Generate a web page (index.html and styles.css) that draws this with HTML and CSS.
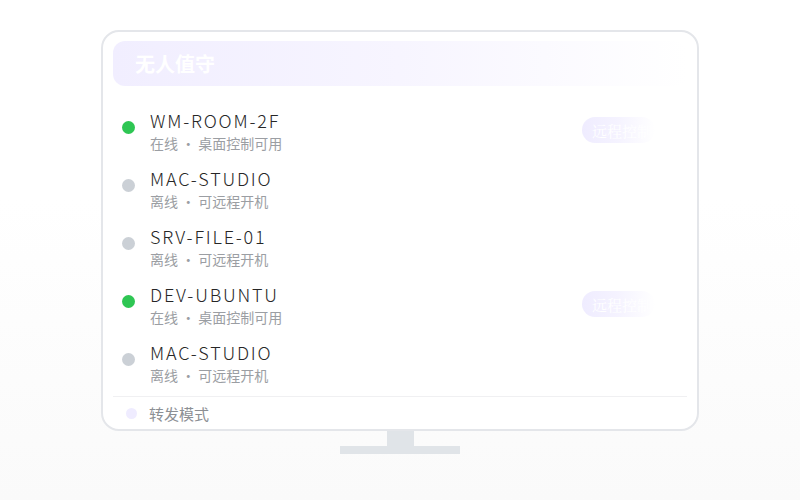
FILE: index.html
```html
<!DOCTYPE html>
<html lang="zh-CN">
<head>
  <meta charset="UTF-8">
  <title>无人值守</title>
  <link rel="stylesheet" href="styles.css">
</head>
<body>
  <div class="scene">
    <div class="monitor">
      <div class="header">无人值守</div>

      <ul class="hosts">
        <li class="host">
          <span class="dot on"></span>
          <div class="info">
            <div class="name">WM-ROOM-2F</div>
            <div class="sub">在线 · 桌面控制可用</div>
          </div>
          <button class="remote">远程控制</button>
        </li>
        <li class="host">
          <span class="dot"></span>
          <div class="info">
            <div class="name">MAC-STUDIO</div>
            <div class="sub">离线 · 可远程开机</div>
          </div>
        </li>
        <li class="host">
          <span class="dot"></span>
          <div class="info">
            <div class="name">SRV-FILE-01</div>
            <div class="sub">离线 · 可远程开机</div>
          </div>
        </li>
        <li class="host">
          <span class="dot on"></span>
          <div class="info">
            <div class="name">DEV-UBUNTU</div>
            <div class="sub">在线 · 桌面控制可用</div>
          </div>
          <button class="remote">远程控制</button>
        </li>
        <li class="host">
          <span class="dot"></span>
          <div class="info">
            <div class="name">MAC-STUDIO</div>
            <div class="sub">离线 · 可远程开机</div>
          </div>
        </li>
      </ul>

      <div class="footer">
        <span class="mini-dot"></span>
        转发模式
      </div>
    </div>
    <div class="neck"></div>
    <div class="base"></div>
  </div>
</body>
</html>
```

FILE: styles.css
```css
html, body {
  height: 100%;
}

body {
  margin: 0;
  background: linear-gradient(180deg, #ffffff 0%, #ffffff 40%, #fafafa 100%);
  font-family: "Noto Sans CJK SC", sans-serif;
}

.scene {
  display: flex;
  flex-direction: column;
  align-items: center;
  padding-top: 30px;
}

.monitor {
  box-sizing: border-box;
  width: 598px;
  height: 401px;
  border: 2px solid #e4e6ea;
  border-radius: 18px;
  background: #ffffff;
  padding: 9px 10px 0 10px;
  display: flex;
  flex-direction: column;
}

.header {
  height: 45px;
  border-radius: 12px;
  background: linear-gradient(90deg, #f1eeff 0%, #f7f5ff 50%, #ffffff 100%);
  color: #ffffff;
  font-weight: bold;
  font-size: 20px;
  line-height: 45px;
  padding-left: 22px;
}

.hosts {
  list-style: none;
  margin: 12px 0 0 0;
  padding: 0;
}

.host {
  box-sizing: border-box;
  height: 58px;
  padding-top: 11px;
  display: flex;
  align-items: flex-start;
}

.dot {
  width: 13px;
  height: 13px;
  border-radius: 50%;
  background: #cbd0d6;
  margin: 12px 15px 0 9px;
  flex-shrink: 0;
}

.dot.on {
  background: #2ec653;
}

.info {
  flex: 1;
}

.name {
  font-size: 18px;
  font-weight: 300;
  line-height: 23px;
  color: #262626;
  letter-spacing: 1.8px;
}

.sub {
  font-size: 14px;
  line-height: 19px;
  margin-top: 2px;
  color: #9b9ea3;
}

.remote {
  width: 73px;
  height: 26px;
  margin: 8px 32px 0 0;
  border: none;
  border-radius: 13px;
  background: linear-gradient(90deg, #efecff 0%, #f5f3ff 50%, #ffffff 100%);
  color: #ffffff;
  font-family: "Noto Serif CJK SC", serif;
  font-size: 15px;
  padding: 0 0 0 10px;
  text-align: left;
  white-space: nowrap;
}

.footer {
  margin-top: 8px;
  border-top: 1px solid #f0f0f2;
  height: 32px;
  display: flex;
  align-items: center;
  font-size: 15px;
  color: #8c8f94;
}

.mini-dot {
  width: 11px;
  height: 11px;
  border-radius: 50%;
  background: #efecff;
  margin: 0 12px 0 13px;
}

.neck {
  width: 27px;
  height: 15px;
  background: #e0e4e8;
}

.base {
  width: 120px;
  height: 8px;
  background: #e0e4e8;
}
```
